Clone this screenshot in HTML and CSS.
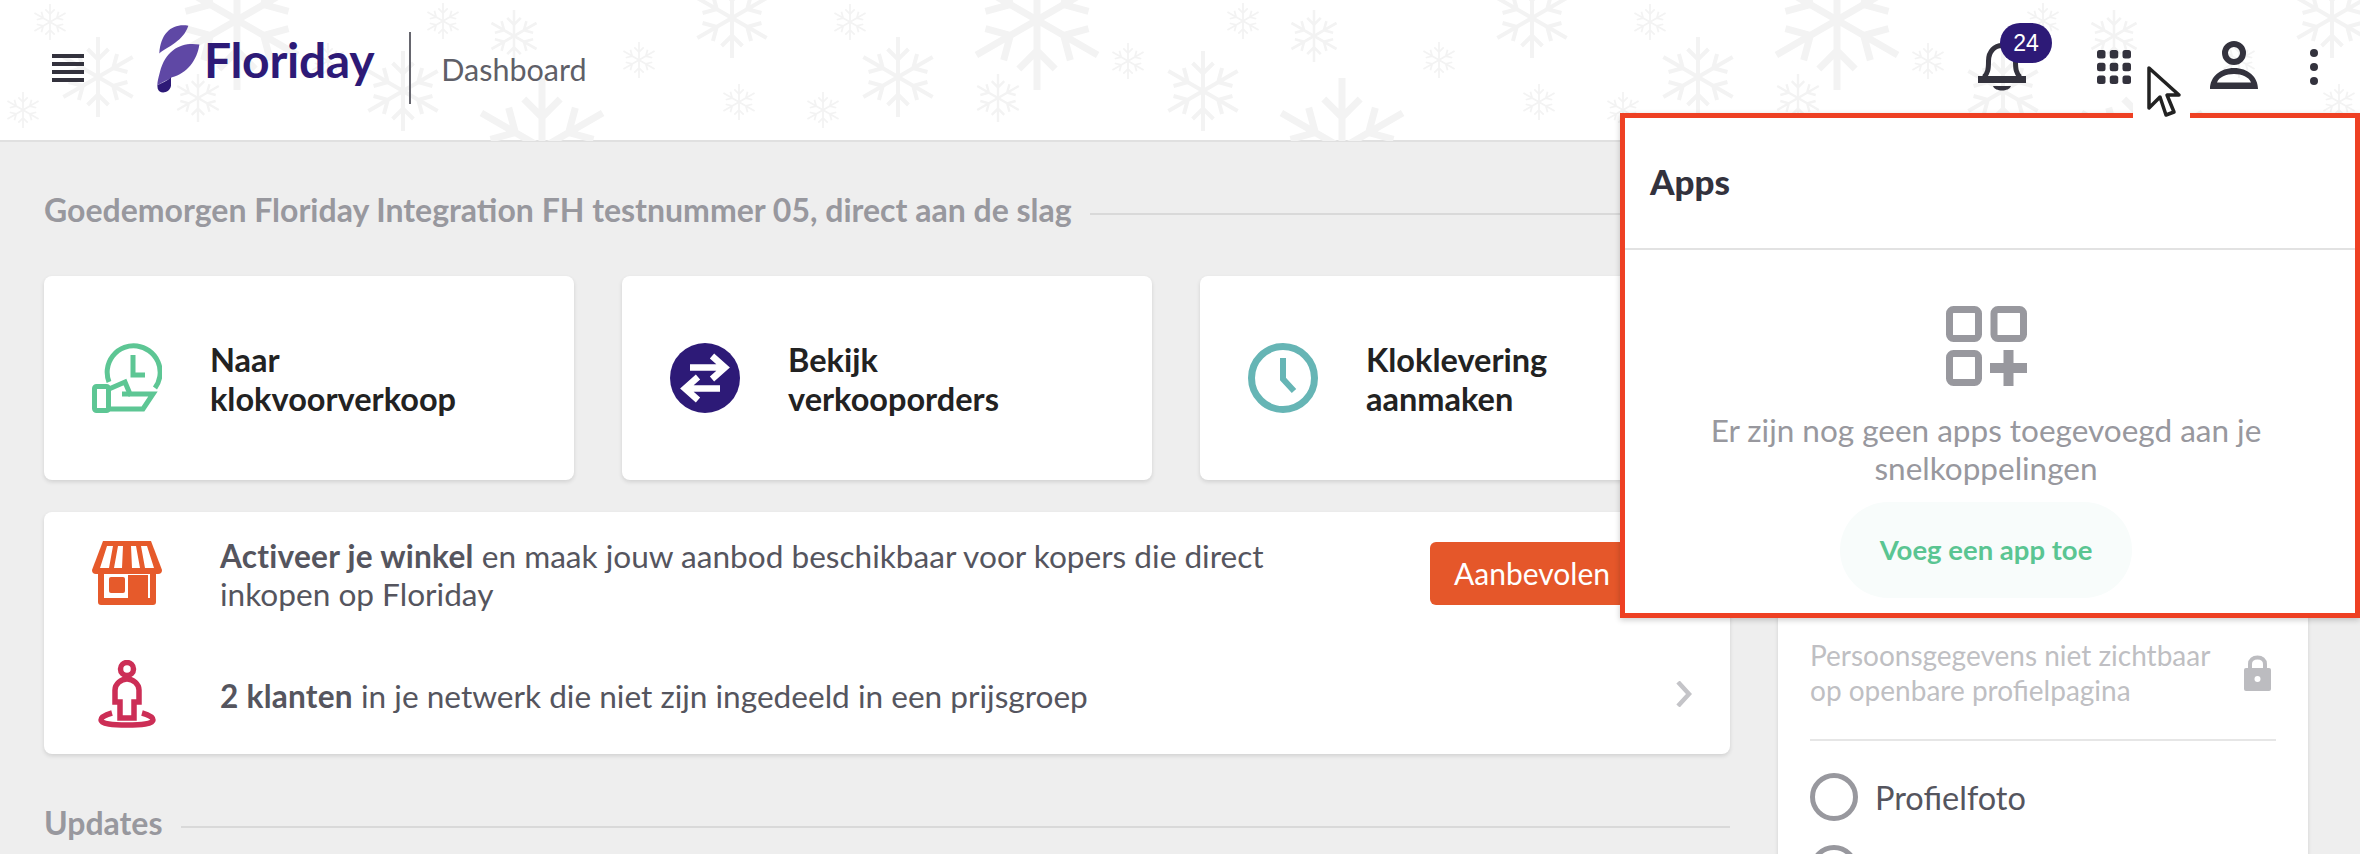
FILE: index.html
```html
<!DOCTYPE html>
<html lang="nl">
<head>
    <meta charset="UTF-8">
    <title>Floriday Dashboard</title>
    <link rel="stylesheet" href="styles.css">
</head>
<body>
    <svg class="icon-defs" width="0" height="0">
        <defs>
            <g id="arm">
                <path d="M0 0V-100M-26 -70L0 -44L26 -70" fill="none" stroke="#f3f3f3" stroke-width="10"/>
            </g>
            <g id="flake">
                <use href="#arm"/>
                <use href="#arm" transform="rotate(60)"/>
                <use href="#arm" transform="rotate(120)"/>
                <use href="#arm" transform="rotate(180)"/>
                <use href="#arm" transform="rotate(240)"/>
                <use href="#arm" transform="rotate(300)"/>
            </g>
            <pattern id="snow-tile" width="800" height="141" patternUnits="userSpaceOnUse">
                <use href="#flake" transform="translate(50 22) scale(.18)"/>
                <use href="#flake" transform="translate(23 110) scale(.18)"/>
                <use href="#flake" transform="translate(98 77) scale(.4)"/>
                <use href="#flake" transform="translate(237 20) scale(.7)"/>
                <use href="#flake" transform="translate(198 98) scale(.24)"/>
                <use href="#flake" transform="translate(328 61) scale(.18)"/>
                <use href="#flake" transform="translate(403 91) scale(.4)"/>
                <use href="#flake" transform="translate(443 21) scale(.18)"/>
                <use href="#flake" transform="translate(514 36) scale(.26)"/>
                <use href="#flake" transform="translate(542 148) scale(.7)"/>
                <use href="#flake" transform="translate(639 60) scale(.18)"/>
                <use href="#flake" transform="translate(732 18) scale(.4)"/>
                <use href="#flake" transform="translate(739 102) scale(.18)"/>
            </pattern>
        </defs>
    </svg>

    <header class="topbar">
        <svg class="topbar-snow" width="2360" height="141"><rect width="2360" height="141" fill="url(#snow-tile)"/></svg>

        <button class="menu-btn" type="button" aria-label="Menu">
            <span></span><span></span><span></span><span></span>
        </button>

        <a class="logo" href="#">
            <svg class="logo-mark" viewBox="48 24 132 212" width="44" height="71">
                <path d="M145 32C100 24 62 50 58 115C84 94 130 78 145 32Z" fill="#5f48a5"/>
                <path d="M178 88C128 80 78 100 60 170C55 188 52 200 52 210C68 200 84 194 96 186C140 176 172 135 178 88Z" fill="#5f48a5"/>
                <path d="M52 210C66 204 82 196 93 187V212C90 234 58 240 53 220Z" fill="#2d1a77"/>
            </svg>
            <span class="logo-text">Floriday</span>
        </a>
        <span class="topbar-divider"></span>
        <span class="topbar-title">Dashboard</span>

        <div class="topbar-actions">
            <div class="bell">
                <svg viewBox="0 0 48 48" width="48" height="48" fill="#33323d">
                    <path d="M6 34C10 30 10.500 26 10.500 18C10.500 8 17 2.500 24 2.500C31 2.500 37.500 8 37.500 18C37.500 26 38 30 42 34" fill="none" stroke="#33323d" stroke-width="5"/>
                    <rect y="33" width="48" height="7"/>
                    <path d="M15 43H33C31 49 17 49 15 43Z"/>
                </svg>
                <span class="bell-badge">24</span>
            </div>
            <svg class="action-grid" viewBox="0 0 34 34" width="34" height="34" fill="#33323d">
                <rect width="8.5" height="8.5" rx="2.5"/><rect x="12.75" width="8.5" height="8.5" rx="2.5"/><rect x="25.5" width="8.5" height="8.5" rx="2.5"/>
                <rect y="12.75" width="8.5" height="8.5" rx="2.5"/><rect x="12.75" y="12.75" width="8.5" height="8.5" rx="2.5"/><rect x="25.5" y="12.75" width="8.5" height="8.5" rx="2.5"/>
                <rect y="25.5" width="8.5" height="8.5" rx="2.5"/><rect x="12.75" y="25.5" width="8.5" height="8.5" rx="2.5"/><rect x="25.5" y="25.5" width="8.5" height="8.5" rx="2.5"/>
            </svg>
            <svg class="action-user" viewBox="0 0 48 48" width="48" height="48" fill="#33323d">
                <circle cx="24" cy="12" r="9" fill="none" stroke="#33323d" stroke-width="6"/>
                <path fill-rule="evenodd" d="M0 48C0 36 10 27 24 27C38 27 48 36 48 48ZM7 41.5H41C39 36 32 33 24 33C16 33 9 36 7 41.5Z"/>
            </svg>
            <svg class="action-more" viewBox="0 0 8 36" width="8" height="36" fill="#33323d">
                <circle cx="4" cy="4" r="4"/><circle cx="4" cy="18" r="4"/><circle cx="4" cy="32" r="4"/>
            </svg>
        </div>
    </header>

    <main class="dash">
        <div class="dash-left">
            <div class="section-title"><span>Goedemorgen Floriday Integration FH testnummer 05, direct aan de slag</span></div>

            <div class="quick-cards">
                <a class="quick-card" href="#">
                    <svg viewBox="0 0 70 70" width="70" height="70" fill="none" stroke="#5dc694" stroke-width="5">
                        <path d="M17 39A26.500 26.500 0 1 1 63 45"/>
                        <path d="M41 12V32H53"/>
                        <rect x="2.500" y="43.500" width="14" height="24" rx="2"/>
                        <path d="M17 46L33 39L38 51H61L51 66H17"/>
                        <path d="M30 51H38"/>
                    </svg>
                    <span>Naar<br>klokvoorverkoop</span>
                </a>
                <a class="quick-card" href="#">
                    <svg viewBox="0 0 70 70" width="70" height="70">
                        <circle cx="35" cy="35" r="35" fill="#2d1a77"/>
                        <path d="M20 24.500H52M42 13L55 24.500L42 36" fill="none" stroke="#fff" stroke-width="6.500"/>
                        <path d="M50 45.500H18M28 34L15 45.500L28 57" fill="none" stroke="#fff" stroke-width="6.500"/>
                    </svg>
                    <span>Bekijk<br>verkooporders</span>
                </a>
                <a class="quick-card" href="#">
                    <svg viewBox="0 0 70 70" width="70" height="70" fill="none" stroke="#66b5b5">
                        <circle cx="35" cy="35" r="31.500" stroke-width="7"/>
                        <path d="M35 15V36L46 48" stroke-width="6"/>
                    </svg>
                    <span>Kloklevering<br>aanmaken</span>
                </a>
            </div>

            <div class="todo-card">
                <div class="todo-row">
                    <svg class="todo-icon" viewBox="0 0 70 64" width="70" height="64">
                        <path fill="#e65a2b" d="M11 0H59L70 29Q70 33 66 33H4Q0 33 0 29Z"/>
                        <path fill="#fff" d="M15 5H21L17 27H8ZM26 5H31L30 27H22ZM39 5H44L48 27H40ZM49 5H55L62 27H53Z"/>
                        <path fill="#e65a2b" fill-rule="evenodd" d="M6 33H64V61Q64 64 61 64H9Q6 64 6 61ZM12 33V57H36V34H56V57H58V33Z"/>
                        <rect x="17" y="36" width="16" height="16" rx="2" fill="#e65a2b"/>
                        <path fill="#e65a2b" fill-rule="evenodd" d="M36 34H56V58H36ZM42 40V58H50V40Z"/>
                    </svg>
                    <p class="todo-text"><b>Activeer je winkel</b> en maak jouw aanbod beschikbaar voor kopers die direct inkopen op Floriday</p>
                    <a class="todo-btn" href="#">Aanbevolen</a>
                </div>
                <div class="todo-row">
                    <svg class="todo-icon todo-icon-person" viewBox="0 0 58 68" width="58" height="68" fill="none" stroke="#cc2e56" stroke-width="5.500">
                        <ellipse cx="29" cy="9" rx="6.500" ry="6.500"/>
                        <path d="M22 58V42H17V30C17 24 23 19 29 19C35 19 41 24 41 30V42H36V58Z"/>
                        <path d="M14 53C7 55 3 57 3 60C3 64 15 65 29 65C43 65 55 64 55 60C55 57 51 55 44 53"/>
                    </svg>
                    <p class="todo-text"><b>2 klanten</b> in je netwerk die niet zijn ingedeeld in een prijsgroep</p>
                    <svg class="todo-chevron" viewBox="0 0 16 26" width="16" height="26" fill="none" stroke="#c4c4c8" stroke-width="4.500">
                        <path d="M2 1L13 13L2 25"/>
                    </svg>
                </div>
            </div>

            <div class="section-title section-updates"><span>Updates</span></div>
        </div>

        <aside class="side-panel">
            <div class="privacy-note">
                <p>Persoonsgegevens niet zichtbaar op openbare profielpagina</p>
                <svg viewBox="0 0 27 36" width="27" height="36">
                    <path d="M6 14V9C6 5 9 2.500 13.500 2.500C18 2.500 21 5 21 9V14" fill="none" stroke="#bcbcc0" stroke-width="4"/>
                    <rect y="13" width="27" height="23" rx="2" fill="#bcbcc0"/>
                    <circle cx="13.500" cy="24" r="3" fill="#fff"/>
                </svg>
            </div>
            <div class="check-row"><span class="check-circle"></span><span>Profielfoto</span></div>
            <div class="check-row"><span class="check-circle"></span></div>
        </aside>
    </main>

    <section class="apps-popup">
        <h2 class="apps-title">Apps</h2>
        <div class="apps-body">
            <svg viewBox="0 0 81 80" width="81" height="80" fill="none" stroke="#98989e" stroke-width="7">
                <rect x="3.500" y="3.500" width="29" height="29" rx="4"/>
                <rect x="48" y="3.500" width="29.500" height="29" rx="4"/>
                <rect x="3.500" y="47.500" width="29" height="29" rx="4"/>
                <path d="M44 62H81M62.500 44V80" stroke-width="10"/>
            </svg>
            <p>Er zijn nog geen apps toegevoegd aan je snelkoppelingen</p>
            <a class="apps-add" href="#">Voeg een app toe</a>
        </div>
    </section>

    <div class="cursor-patch"></div>
    <svg class="cursor" viewBox="0 0 36 54" width="36" height="54">
        <path d="M3 3V43L14 32L20 50L28 47L21 30H33Z" fill="#fff" stroke="#222" stroke-width="3.500" stroke-linejoin="round"/>
    </svg>
</body>
</html>
```

FILE: styles.css
```css
* {
    box-sizing: border-box;
}
html, body {
    height: 100%;
}
body {
    margin: 0;
    background: #eeeeee;
    color: #55555e;
    font-family: 'Lato', 'Liberation Sans', sans-serif;
    overflow: hidden;
}
a {
    color: inherit;
    text-decoration: none;
}
p {
    margin: 0;
}
.icon-defs {
    position: absolute;
}

/* top bar */
.topbar {
    position: relative;
    display: flex;
    align-items: center;
    height: 142px;
    padding-left: 52px;
    background: #fff;
    border-bottom: 2px solid #e0e0e0;
}
.topbar-snow {
    position: absolute;
    left: 0;
    top: 0;
}
.menu-btn {
    position: relative;
    display: flex;
    flex-direction: column;
    gap: 4px;
    width: 32px;
    margin-top: -4px;
    padding: 0;
    border: none;
    background: none;
}
.menu-btn span {
    height: 4px;
    background: #33323d;
}
.logo {
    position: relative;
    display: flex;
    align-items: flex-start;
    margin-left: 72px;
    margin-top: -23px;
}
.logo-text {
    margin-left: 4px;
    margin-top: 10px;
    color: #2d1a77;
    font-size: 48px;
    font-weight: 700;
    line-height: 53px;
    letter-spacing: -0.3px;
}
.topbar-divider {
    position: relative;
    width: 2px;
    height: 72px;
    margin-left: 35px;
    margin-top: -4px;
    background: #66666e;
}
.topbar-title {
    position: relative;
    margin-left: 30px;
    margin-top: -3px;
    font-size: 30.5px;
    color: #5f5f68;
}
.topbar-actions {
    position: relative;
    display: flex;
    align-items: flex-start;
    margin-left: auto;
    height: 142px;
}
.bell {
    position: relative;
    width: 48px;
    height: 48px;
    margin-top: 44px;
    margin-right: 71px;
}
.bell svg {
    display: block;
}
.bell-badge {
    position: absolute;
    left: 22px;
    top: -20px;
    width: 52px;
    height: 40px;
    border-radius: 20px;
    background: #2d1a77;
    color: #fff;
    font-family: 'Liberation Sans', sans-serif;
    font-size: 23px;
    line-height: 40px;
    text-align: center;
}
.action-grid {
    margin-top: 51px;
    margin-right: 79px;
}
.action-user {
    margin-top: 42px;
    margin-right: 52px;
}
.action-more {
    margin-top: 50px;
    margin-right: 42px;
}

/* page content */
.dash {
    display: flex;
    gap: 48px;
    padding: 48px 52px 0 44px;
}
.dash-left {
    flex: 0 0 1686px;
}
.section-title {
    display: flex;
    align-items: center;
    gap: 18px;
    color: #98989e;
    font-size: 32px;
    font-weight: 700;
    line-height: 39px;
}
.section-title::after {
    content: "";
    flex: 1;
    height: 2px;
    margin-top: 9px;
    background: #d9d9d9;
}
.section-updates {
    margin-top: 49px;
}
.quick-cards {
    display: grid;
    grid-template-columns: repeat(3, 530px);
    gap: 48px;
    margin-top: 47px;
}
.quick-card {
    display: flex;
    align-items: center;
    gap: 48px;
    height: 204px;
    padding-left: 48px;
    background: #fff;
    border-radius: 8px;
    box-shadow: 0 2px 4px rgba(0,0,0,0.12);
    color: #222;
    font-size: 32.5px;
    font-weight: 700;
    line-height: 39px;
}
.quick-card span {
    padding-top: 2px;
}
.todo-card {
    display: grid;
    grid-template-rows: 121px 121px;
    margin-top: 32px;
    background: #fff;
    border-radius: 8px;
    box-shadow: 0 2px 4px rgba(0,0,0,0.12);
}
.todo-row {
    display: flex;
    align-items: center;
    padding-left: 48px;
}
.todo-icon-person {
    margin-left: 6px;
    margin-right: 6px;
}
.todo-text {
    width: 1100px;
    margin-left: 58px;
    margin-top: 5px;
    font-size: 31.6px;
    line-height: 38px;
}
.todo-text b {
    font-weight: 700;
    letter-spacing: 0.25px;
}
.todo-btn {
    width: 203px;
    height: 63px;
    margin-top: 2px;
    margin-left: 110px;
    padding-left: 24px;
    background: #e5572a;
    border-radius: 6px;
    color: #fff;
    font-size: 30px;
    line-height: 63px;
}
.todo-chevron {
    margin-left: 356px;
}

/* right column, its top is covered by the apps popup */
.side-panel {
    flex: 0 0 530px;
    height: 640px;
    margin-top: 86px;
    padding: 362px 32px 0 32px;
    background: #fff;
    box-shadow: 0 2px 4px rgba(0,0,0,0.12);
}
.privacy-note {
    display: flex;
    align-items: center;
    justify-content: space-between;
    padding-right: 5px;
    padding-bottom: 31px;
    border-bottom: 2px solid #e6e6e6;
    color: #bfbfc3;
    font-size: 28px;
    line-height: 35px;
}
.privacy-note p {
    width: 420px;
}
.check-row {
    display: flex;
    align-items: center;
    gap: 17px;
    height: 48px;
    margin-top: 32px;
    font-size: 32.5px;
}
.check-row + .check-row {
    margin-top: 24px;
}
.check-circle {
    width: 48px;
    height: 48px;
    border: 5px solid #98989e;
    border-radius: 50%;
}

/* apps popup with the red marker round it */
.apps-popup {
    position: absolute;
    left: 1620px;
    top: 113px;
    width: 740px;
    height: 505px;
    background: #fff;
    border: 5px solid #ee4023;
    box-shadow: 0 2px 6px rgba(0,0,0,0.2);
}
.apps-title {
    height: 132px;
    margin: 0;
    padding: 43px 0 0 25px;
    border-bottom: 2px solid #e2e2e2;
    color: #33323d;
    font-size: 35px;
    font-weight: 900;
    line-height: 40px;
}
.apps-body {
    display: flex;
    flex-direction: column;
    align-items: center;
    padding-top: 56px;
    padding-right: 8px;
    color: #98989e;
    font-size: 31.5px;
    line-height: 38px;
    text-align: center;
}
.apps-body svg {
    display: block;
}
.apps-body p {
    width: 600px;
    margin-top: 25px;
}
.apps-add {
    width: 292px;
    height: 96px;
    margin-top: 15px;
    border-radius: 48px;
    background: #f8fcfb;
    color: #5ac592;
    font-size: 27.5px;
    font-weight: 700;
    line-height: 96px;
}

/* mouse pointer in the screenshot */
.cursor-patch {
    position: absolute;
    left: 2133px;
    top: 60px;
    width: 57px;
    height: 60px;
    background: #fff;
}
.cursor {
    position: absolute;
    left: 2146px;
    top: 65px;
}
```
